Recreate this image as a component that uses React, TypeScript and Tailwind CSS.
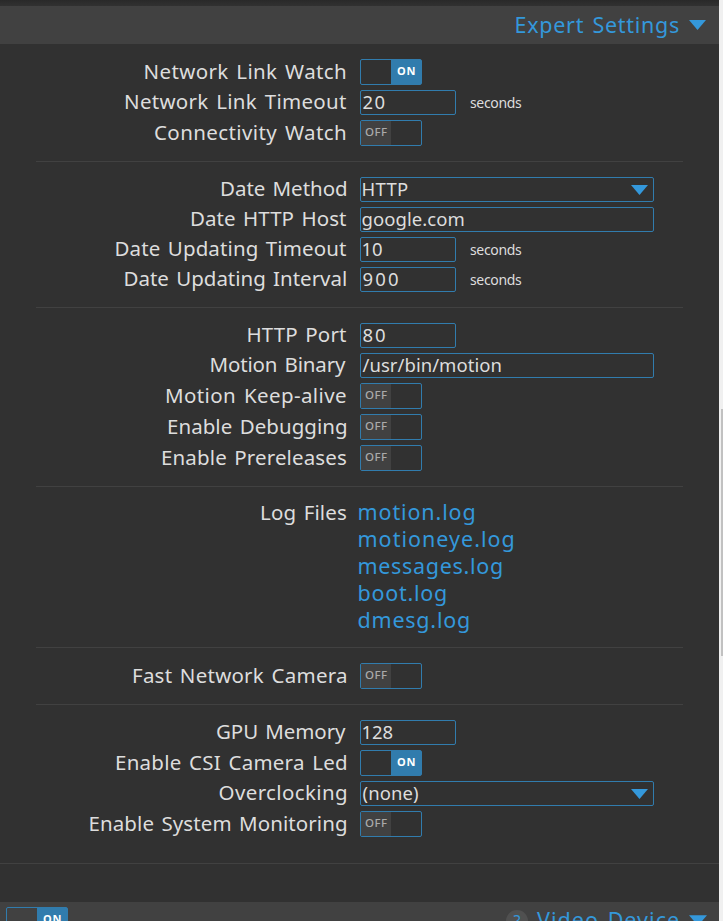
import { useLayoutEffect, useRef, useState, type ReactNode } from "react";

/** One line of text, tracked so that its glyphs span exactly `w` pixels. */
function Tracked({ text, w, gap = 0, className = "" }: { text: string; w: number; gap?: number; className?: string }) {
  const ref = useRef<HTMLSpanElement>(null);
  const [fit, setFit] = useState({ spacing: 0, indent: 0 });
  useLayoutEffect(() => {
    if (!ref.current) return;
    const css = getComputedStyle(ref.current);
    const ctx = document.createElement("canvas").getContext("2d");
    if (!ctx) return;
    ctx.font = `${css.fontWeight} ${css.fontSize} ${css.fontFamily}`;
    const m = ctx.measureText(text);
    const ink = m.actualBoundingBoxLeft + m.actualBoundingBoxRight + gap * (text.split(" ").length - 1);
    setFit({ spacing: (w - ink) / Math.max(1, text.length - 1), indent: m.actualBoundingBoxLeft });
  }, [text, w, gap]);
  return (
    <span
      ref={ref}
      className={`block shrink-0 whitespace-nowrap ${className}`}
      style={{ width: w, letterSpacing: fit.spacing, textIndent: fit.indent, wordSpacing: gap }}
    >
      {text}
    </span>
  );
}

function Arrow({ className = "h-[10px] w-[17px]" }: { className?: string }) {
  return (
    <svg viewBox="0 0 17 10" className={`shrink-0 fill-[#3498db] ${className}`}>
      <path d="M0 0H17L8.5 10Z" />
    </svg>
  );
}

function Switch({ on = false }: { on?: boolean }) {
  return (
    <div className="flex h-[26px] w-[62px] shrink-0 rounded-[2px] border border-[#317cad]">
      {on ? (
        <div className="ml-[30px] w-[30px] bg-[#317cad] pl-[6px] text-[11px] leading-[22px] font-bold text-white">
          <Tracked text="ON" w={17.5} />
        </div>
      ) : (
        <div className="w-[30px] bg-[#414141] pl-[4px] text-[11.5px] leading-[21px] font-medium text-[#aaa]">
          <Tracked text="OFF" w={22} />
        </div>
      )}
    </div>
  );
}

function Field({ value, w, wide, select }: { value: string; w: number; wide?: boolean; select?: boolean }) {
  return (
    <div
      className={`flex h-[25px] shrink-0 items-start justify-between rounded-[2px] border border-[#317cad] pr-[5px] pl-[1.5px] text-[18.5px] leading-[21px] ${wide ? "w-[294px]" : "w-24"}`}
    >
      <Tracked text={value} w={w} />
      {select && <Arrow className="mt-[7px] h-[10px] w-[17px]" />}
    </div>
  );
}

function Row({
  label,
  w,
  seconds,
  toggle,
  children,
}: {
  label: string;
  w: number;
  seconds?: boolean;
  toggle?: boolean;
  children: ReactNode;
}) {
  return (
    <div className="flex">
      <div
        className={`mr-[14px] flex h-[25px] w-[346px] justify-end text-[20.5px] ${toggle ? "leading-[25px]" : "leading-[23px]"}`}
      >
        <Tracked text={label} w={w} gap={2} />
      </div>
      {children}
      {seconds && (
        <div className="ml-[14px] text-[14px] leading-[25px]">
          <Tracked text="seconds" w={52} />
        </div>
      )}
    </div>
  );
}

const Line = () => <div className="mx-[36px] my-[10px] h-px bg-[#414141]" />;

const logs = [
  { name: "motion.log", w: 116 },
  { name: "motioneye.log", w: 155 },
  { name: "messages.log", w: 143.5 },
  { name: "boot.log", w: 87.5 },
  { name: "dmesg.log", w: 110.5 },
];

export default function App() {
  return (
    <div className="flex h-[921px] w-[723px] overflow-hidden bg-[#f0f0f0] font-['Noto_Sans','Liberation_Sans',sans-serif] text-[#dddddd]">
      <main className="w-[719px] shrink-0 bg-[#313131]">
        <div className="h-[6px] bg-linear-to-b from-[#292929] to-[#313131]" />
        <header className="flex h-[38px] items-center justify-end bg-[#414141] pr-[13px] text-[21.5px] leading-[38px] text-[#3498db]">
          <Tracked text="Expert Settings" w={162.5} gap={2} />
          <Arrow className="ml-[10px] h-[10px] w-[17px]" />
        </header>

        <section className="flex h-[819px] flex-col gap-[5px] pt-[15px]">
          <Row label="Network Link Watch" w={201.5} toggle><Switch on /></Row>
          <Row label="Network Link Timeout" w={221} seconds><Field value="20" w={22} /></Row>
          <Row label="Connectivity Watch" w={191} toggle><Switch /></Row>
          <Line />
          <Row label="Date Method" w={125}><Field value="HTTP" w={45.5} wide select /></Row>
          <Row label="Date HTTP Host" w={155}><Field value="google.com" w={101} wide /></Row>
          <Row label="Date Updating Timeout" w={230.5} seconds><Field value="10" w={19.5} /></Row>
          <Row label="Date Updating Interval" w={221.5} seconds><Field value="900" w={35.5} /></Row>
          <Line />
          <Row label="HTTP Port" w={98.5}><Field value="80" w={22.5} /></Row>
          <Row label="Motion Binary" w={135.5}><Field value="/usr/bin/motion" w={138} wide /></Row>
          <Row label="Motion Keep-alive" w={180} toggle><Switch /></Row>
          <Row label="Enable Debugging" w={178} toggle><Switch /></Row>
          <Row label="Enable Prereleases" w={184} toggle><Switch /></Row>
          <Line />
          <div className="flex h-[130px]">
            <div className="mr-[12.5px] flex w-[346px] justify-end text-[20.5px] leading-[21px]">
              <Tracked text="Log Files" w={85} gap={2} />
            </div>
            <div className="text-[21.5px] leading-[27px] text-[#3498db]">
              <div className="-mt-[4px]">
                {logs.map((l) => (
                  <Tracked key={l.name} text={l.name} w={l.w} />
                ))}
              </div>
            </div>
          </div>
          <Line />
          <Row label="Fast Network Camera" w={213} toggle><Switch /></Row>
          <Line />
          <Row label="GPU Memory" w={129}><Field value="128" w={30} /></Row>
          <Row label="Enable CSI Camera Led" w={230} toggle><Switch on /></Row>
          <Row label="Overclocking" w={126.5}><Field value="(none)" w={55.5} wide select /></Row>
          <Row label="Enable System Monitoring" w={256.5} toggle><Switch /></Row>
        </section>

        <div className="h-px bg-[#414141]" />
        <div className="h-[38px]" />
        <header className="flex h-[38px] items-start bg-[#414141] pt-[5px] pr-[12px] pl-[6px] text-[#3498db]">
          <Switch on />
          <div className="mt-[3px] ml-auto flex size-[22px] justify-center rounded-full bg-[#505050] text-[16px] leading-[22px]">?</div>
          <div className="ml-[9px] text-[21.5px] leading-[26px]">
            <Tracked text="Video Device" w={142} gap={2} />
          </div>
          <Arrow className="mt-[8px] ml-[10px] h-[11px] w-[18px]" />
        </header>
      </main>
      <aside className="flex w-1 justify-end pt-[409px]">
        <div className="h-[247px] w-[2px] bg-[#c1c1c1]" />
      </aside>
    </div>
  );
}
